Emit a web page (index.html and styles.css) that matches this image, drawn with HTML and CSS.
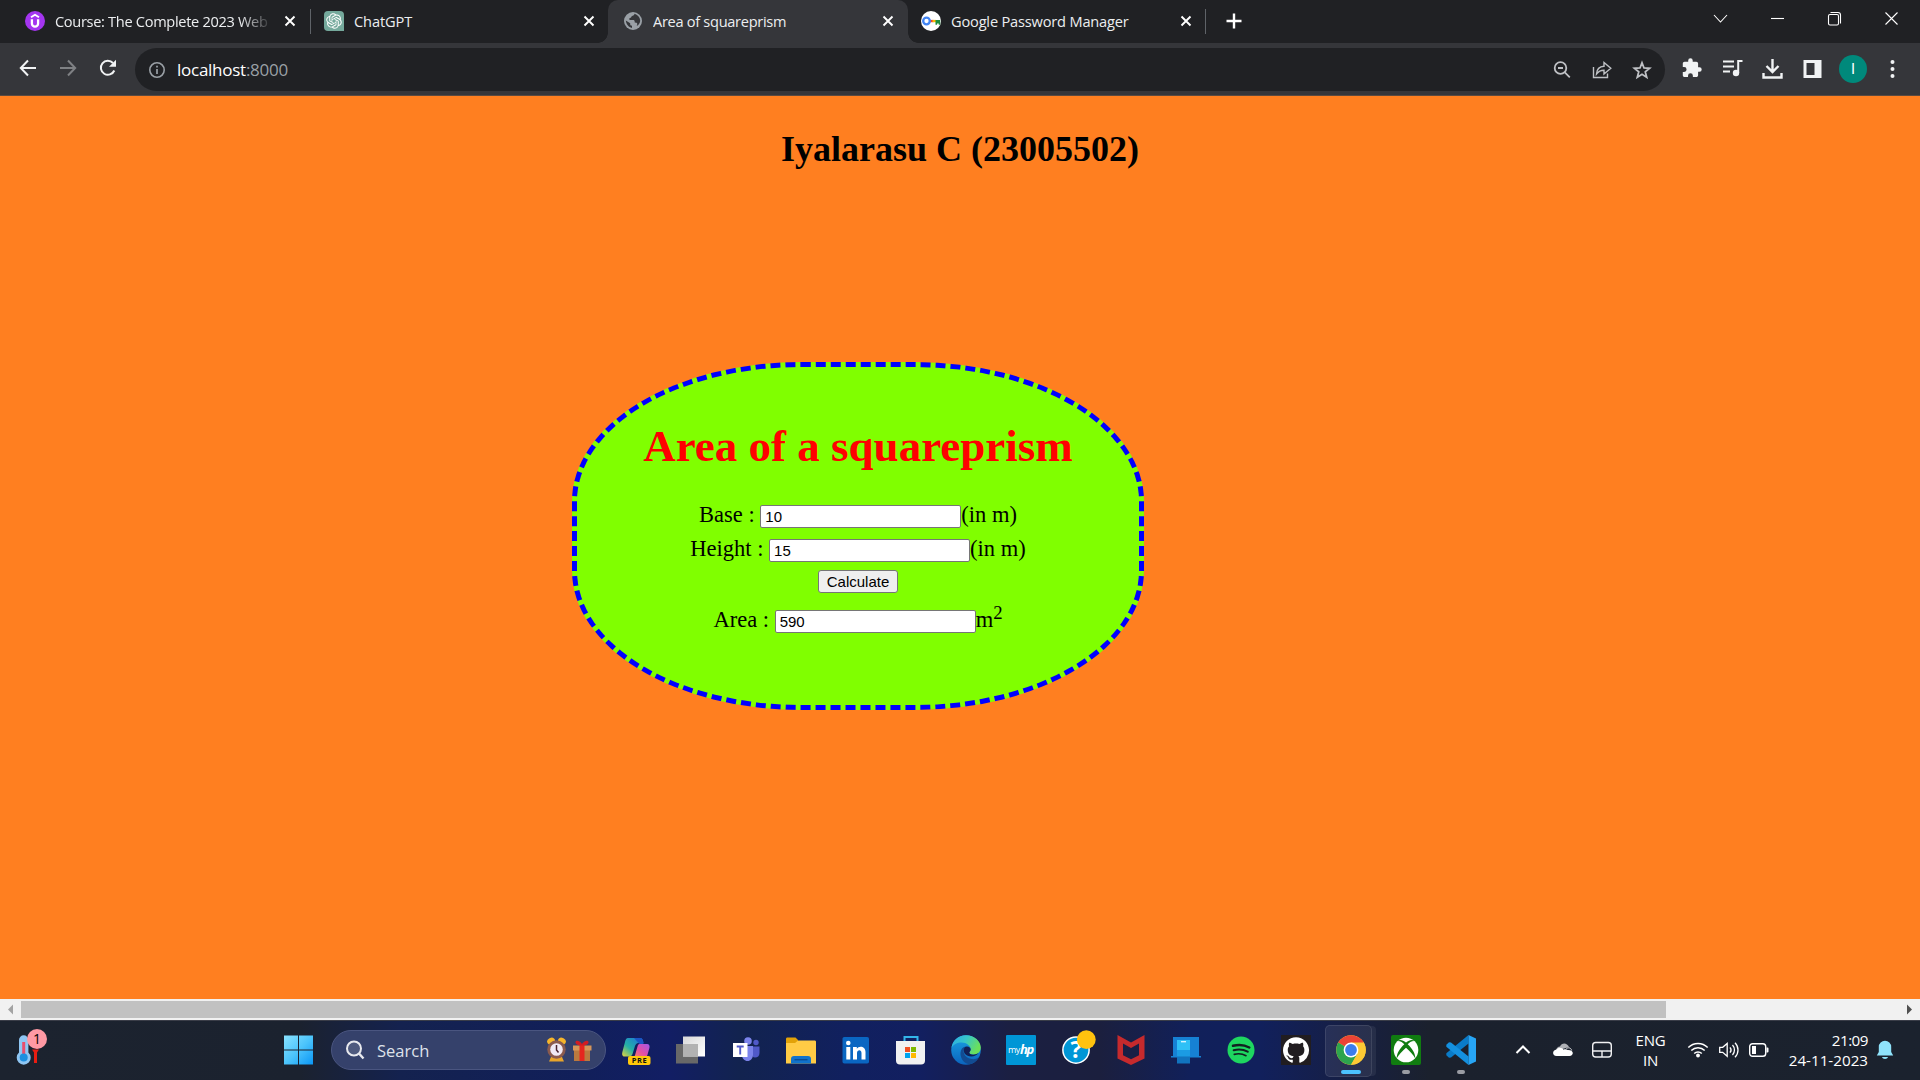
FILE: index.html
```html
<!DOCTYPE html>
<html lang="en">
<head>
<meta charset="utf-8">
<title>Area of squareprism</title>
<link rel="stylesheet" href="styles.css">
</head>
<body>
<div class="screen">
  <header class="tabs">
    <div class="tab tab-first">
      <svg class="favicon" viewBox="0 0 20 20"><circle cx="10" cy="10" r="10" fill="#a435f0"/><path d="M6.900 8.300v4.300a3.100 3.100 0 0 0 6.200 0V8.300" fill="none" stroke="#fff" stroke-width="2.300"/><path d="M6 6.200L10 3.800l4 2.400" fill="none" stroke="#fff" stroke-width="1.900"/></svg>
      <span class="tab-title faded"><span class="t1">Course: The Complete 2023 Web</span></span>
      <svg class="tab-close" viewBox="0 0 12 12"><path d="M1.500 1.500l9 9M10.500 1.500l-9 9"/></svg>
    </div>
    <div class="tab tab-second">
      <svg class="favicon" viewBox="0 0 20 20"><path d="M4 0h12a4 4 0 0 1 4 4v16H4a4 4 0 0 1-4-4V4a4 4 0 0 1 4-4z" fill="#75a99c"/><path transform="translate(2.200 2.200) scale(.65)" fill="#fff" d="M22.2819 9.8211a5.9847 5.9847 0 0 0-.5157-4.9108 6.0462 6.0462 0 0 0-6.5098-2.9A6.0651 6.0651 0 0 0 4.9807 4.1818a5.9847 5.9847 0 0 0-3.9977 2.9 6.0462 6.0462 0 0 0 .7427 7.0966 5.98 5.98 0 0 0 .511 4.9107 6.051 6.051 0 0 0 6.5146 2.9001A5.9847 5.9847 0 0 0 13.2599 24a6.0557 6.0557 0 0 0 5.7718-4.2058 5.9894 5.9894 0 0 0 3.9977-2.9001 6.0557 6.0557 0 0 0-.7475-7.0729zm-9.022 12.6081a4.4755 4.4755 0 0 1-2.8764-1.0408l.1419-.0804 4.7783-2.7582a.7948.7948 0 0 0 .3927-.6813v-6.7369l2.02 1.1686a.071.071 0 0 1 .038.052v5.5826a4.504 4.504 0 0 1-4.4945 4.4944zm-9.6607-4.1254a4.4708 4.4708 0 0 1-.5346-3.0137l.142.0852 4.783 2.7582a.7712.7712 0 0 0 .7806 0l5.8428-3.3685v2.3324a.0804.0804 0 0 1-.0332.0615L9.74 19.9502a4.4992 4.4992 0 0 1-6.1408-1.6464zM2.3408 7.8956a4.485 4.485 0 0 1 2.3655-1.9728V11.6a.7664.7664 0 0 0 .3879.6765l5.8144 3.3543-2.0201 1.1685a.0757.0757 0 0 1-.071 0l-4.8303-2.7865A4.504 4.504 0 0 1 2.3408 7.872zm16.5963 3.8558L13.1038 8.364 15.1192 7.2a.0757.0757 0 0 1 .071 0l4.8303 2.7913a4.4944 4.4944 0 0 1-.6765 8.1042v-5.6772a.79.79 0 0 0-.407-.667zm2.0107-3.0231l-.142-.0852-4.7735-2.7818a.7759.7759 0 0 0-.7854 0L9.409 9.2297V6.8974a.0662.0662 0 0 1 .0284-.0615l4.8303-2.7866a4.4992 4.4992 0 0 1 6.6802 4.66zM8.3065 12.863l-2.02-1.1638a.0804.0804 0 0 1-.038-.0567V6.0742a4.4992 4.4992 0 0 1 7.3757-3.4537l-.142.0805L8.704 5.459a.7948.7948 0 0 0-.3927.6813zm1.0976-2.3654l2.602-1.4998 2.6069 1.4998v2.9994l-2.5974 1.4997-2.6067-1.4997Z"/></svg>
      <span class="tab-title"><span class="t2">ChatGPT</span></span>
      <svg class="tab-close" viewBox="0 0 12 12"><path d="M1.500 1.500l9 9M10.500 1.500l-9 9"/></svg>
    </div>
    <div class="tab tab-active">
      <svg class="favicon" viewBox="0 0 20 20"><circle cx="10" cy="10" r="9" fill="#9aa0a6"/><path d="M11.500 2.800c-.3 1.500-1 2-2.700 2.200-.6 1.500-1 1.900-2.500 2.200l.2 1.800h4.200c1.200.3 1 2 1 2.600l1.800.2c1.100.3.800 2 .2 3.200 2.300-1.200 3.600-3.500 3.500-5.500-.3-3.300-2.600-6-5.700-6.700zM2.800 9.500c.3 3.600 2.800 6.800 6.200 7.500v-2.300c-1.500 0-2-.8-1.800-2.500z" fill="#35363a"/></svg>
      <span class="tab-title"><span class="t3">Area of squareprism</span></span>
      <svg class="tab-close" viewBox="0 0 12 12"><path d="M1.500 1.500l9 9M10.500 1.500l-9 9"/></svg>
    </div>
    <div class="tab tab-last">
      <svg class="favicon" viewBox="0 0 20 20"><circle cx="10" cy="10" r="10" fill="#fff"/><path d="M9 8.900h3.500v2.300H9z" fill="#ea4335"/><path d="M11.500 8.900H15v2.300h-3.500z" fill="#fbbc04"/><path d="M14.500 8.900h4.700v4.800h-1.500v-1.200h-1.600v1.200h-1.600z" fill="#1e8e3e"/><circle cx="5.500" cy="10" r="3.300" fill="none" stroke="#4285f4" stroke-width="2.300"/></svg>
      <span class="tab-title"><span class="t4">Google Password Manager</span></span>
      <svg class="tab-close" viewBox="0 0 12 12"><path d="M1.500 1.500l9 9M10.500 1.500l-9 9"/></svg>
    </div>
    <svg class="new-tab" viewBox="0 0 16 16"><path d="M8 .5v15M.5 8h15" stroke="#fff" stroke-width="2.400"/></svg>
    <div class="window-buttons">
      <svg viewBox="0 0 15 15"><path d="M1 4l6.500 7L14 4"/></svg>
      <svg viewBox="0 0 15 15"><path d="M1 7.500h13"/></svg>
      <svg viewBox="0 0 15 15"><rect x="1.500" y="3.500" width="10" height="10.500" rx="1.500"/><path d="M3.500 1.500H11a2.500 2.500 0 0 1 2.500 2.500v8.500"/></svg>
      <svg viewBox="0 0 15 15"><path d="M1.500 1.500l12 12M13.500 1.500l-12 12"/></svg>
    </div>
  </header>

  <div class="toolbar">
    <div class="nav">
      <svg viewBox="0 0 20 20"><path d="M18 10H3M10 2.500L2.800 10 10 17.500" stroke="#f1f3f4"/></svg>
      <svg viewBox="0 0 20 20"><path d="M2 10h15M10 2.500l7.200 7.500L10 17.500" stroke="#7f8184"/></svg>
      <svg viewBox="0 0 20 20"><path d="M16.300 12.500A7 7 0 1 1 15 5" stroke="#f1f3f4"/><path d="M18 1.800v7h-7z" fill="#f1f3f4"/></svg>
    </div>
    <div class="omnibox">
      <svg class="info" viewBox="0 0 18 18"><circle cx="9" cy="9" r="7.200" fill="none" stroke="#9aa0a6" stroke-width="1.600"/><path d="M9 8v5M9 4.800v1.800" stroke="#9aa0a6" stroke-width="1.700"/></svg>
      <span class="url"><span class="host">localhost</span><span class="port">:8000</span></span>
      <div class="omni-icons">
        <svg viewBox="0 0 20 20"><circle cx="8.500" cy="8" r="5.800"/><path d="M12.800 12.300l5 5M6 8h5"/></svg>
        <svg viewBox="0 0 20 20"><path d="M1.500 7v10.500h14V13.500M4.500 14C4.800 9.500 7.500 6.500 12 6.300V2.500L18.800 8.300 12 14v-3.700C8.500 10.200 6.500 11.500 4.500 14z" stroke-width="1.400"/></svg>
        <svg viewBox="0 0 20 20"><path d="M10 2.800l2 5.200 5.600.3-4.300 3.600 1.400 5.400-4.700-3-4.700 3 1.400-5.400L2.400 8.300 8 8z"/></svg>
      </div>
    </div>
    <div class="actions">
      <svg viewBox="0 0 24 24"><path transform="translate(1 .3) scale(.9)" d="M20.500 11H19V7c0-1.100-.9-2-2-2h-4V3.500a2.500 2.500 0 0 0-5 0V5H4c-1.100 0-2 .9-2 2v3.800h1.500a2.700 2.700 0 0 1 0 5.400H2V20c0 1.100.9 2 2 2h3.800v-1.500a2.700 2.700 0 0 1 5.400 0V22H17c1.100 0 2-.9 2-2v-4h1.500a2.500 2.500 0 0 0 0-5z" fill="#f1f3f4"/></svg>
      <svg viewBox="0 0 24 24"><path d="M3 4.500h11M3 9.500h11M3 14.500h7M18.200 16V4h4.300" fill="none" stroke="#f1f3f4" stroke-width="2"/><circle cx="16" cy="16" r="3.200" fill="#f1f3f4"/></svg>
      <svg viewBox="0 0 24 24"><path d="M12.500 2v12M6.500 9l6 6 6-6M3.500 16v4.500h18V16" fill="none" stroke="#f1f3f4" stroke-width="2.400"/></svg>
      <svg viewBox="0 0 24 24"><path d="M3.500 3h18v18h-18zM6.500 6v12h8V6z" fill="#f1f3f4" fill-rule="evenodd"/></svg>
      <span class="avatar">I</span>
      <svg viewBox="0 0 24 24"><g fill="#f1f3f4"><circle cx="10.500" cy="5" r="2"/><circle cx="10.500" cy="12" r="2"/><circle cx="10.500" cy="19" r="2"/></g></svg>
    </div>
  </div>

  <main class="page">
    <h1 class="owner">Iyalarasu C (23005502)</h1>
    <form class="card">
      <h1 class="title">Area of a squareprism</h1>
      <div class="row">Base : <input type="text" value="10">(in m)</div>
      <div class="row">Height : <input type="text" value="15">(in m)</div>
      <div class="submit"><button type="button">Calculate</button></div>
      <div class="row">Area : <input type="text" value="590">m<sup>2</sup></div>
    </form>
  </main>

  <div class="scrollbar">
    <svg viewBox="0 0 21 21"><path d="M13 5.500v10L8 10.500z" fill="#a3a3a3"/></svg>
    <div class="thumb"></div>
    <svg class="arrow-right" viewBox="0 0 21 21"><path d="M8 5.500v10l5-5z" fill="#505050"/></svg>
  </div>

  <footer class="taskbar">
    <div class="weather">
      <svg viewBox="0 0 40 44"><path d="M7 12a4.700 4.700 0 0 1 9.400 0v12.500a7 7 0 1 1-9.400 0z" fill="#8fc6f3"/><path d="M10.200 14h3v14h-3z" fill="#e84e6e"/><circle cx="11.700" cy="29.500" r="4" fill="#1c8fe0"/><path d="M20 21.500h7l-2 3v10.500h-3V24.500z" fill="#e81d12"/><circle cx="25" cy="11" r="10" fill="#ff99a4"/></svg>
      <span class="badge">1</span>
    </div>
    <div class="cell start"><svg viewBox="0 0 30 30"><defs><linearGradient id="win" gradientUnits="userSpaceOnUse" x1="0" y1="0" x2="30" y2="30"><stop offset="0" stop-color="#8be3ff"/><stop offset=".5" stop-color="#4cc4fb"/><stop offset="1" stop-color="#0794f5"/></linearGradient></defs><path d="M0 .500h14v14H0zM15 .500h14v14H15zM0 15.500h14v14H0zM15 15.500h14v14H15z" fill="url(#win)"/></svg></div>
    <div class="search">
      <svg class="lens" viewBox="0 0 20 20"><circle cx="9" cy="8.500" r="7" fill="#ffffff22" stroke="#e8e9ee" stroke-width="2"/><path d="M14 13.500l4.500 5" stroke="#e8e9ee" stroke-width="2.400"/></svg>
      <span class="search-label"><span class="t6">Search</span></span>
      <svg class="gifts" viewBox="0 0 46 26"><ellipse cx="5" cy="4" rx="4" ry="3.200" fill="#f6b52a" transform="rotate(-28 5 4)"/><ellipse cx="16" cy="4" rx="4" ry="3.200" fill="#f6b52a" transform="rotate(28 16 4)"/><path d="M5 20h11l2 4.500H3z" fill="#e9a52b"/><circle cx="10.500" cy="12.500" r="9.200" fill="#8b5a4e"/><circle cx="10.500" cy="12.500" r="6.300" fill="#f0e9f5"/><path d="M10.500 8v5l2 2.500" fill="none" stroke="#4b2530" stroke-width="1.500"/><path d="M28 11h16v13H28z" fill="#b9793f"/><path d="M27 8.500h18.500v5H27z" fill="#d79659"/><path d="M33.500 8h5v16h-5z" fill="#e5261f"/><path d="M36 8.500c-3 0-7-1-6.500-3.500s5-1 6.500 2c1.500-3 6-4.500 6.500-2S39 8.500 36 8.500z" fill="#d31c22"/></svg>
    </div>
    <div class="apps">
      <div class="cell"><svg viewBox="0 0 30 30"><defs><linearGradient id="cpa" x1="0" y1="1" x2="1" y2="0"><stop offset="0" stop-color="#e7d43b"/><stop offset=".4" stop-color="#25b0a5"/><stop offset="1" stop-color="#1c6ee0"/></linearGradient><linearGradient id="cpb" x1="1" y1="0" x2="0" y2="1"><stop offset="0" stop-color="#a157e8"/><stop offset=".5" stop-color="#e24fa5"/><stop offset="1" stop-color="#ff8757"/></linearGradient></defs><path d="M7 3h12c2.500 0 3 2 3.500 5h-5c-2 0-3 1.500-3.500 3l-2.500 8c-.6 2-2 2.500-4 2.500H3.500C1 21.500.8 19 1.500 16.500L4 7c.6-2.500 1.400-4 3-4z" fill="url(#cpa)"/><path d="M13 3h6c2.500 0 3 2 3.500 6h-4z" fill="#1a55c4"/><path d="M18.500 9H26c2.300 0 3 1.800 2.400 4l-2 7c-.6 2-1.400 3-3 3H11c2.500-1 3-2.500 3.500-4.500l2-7c.4-1.500.8-2.500 2-2.500z" fill="url(#cpb)"/><rect x="7" y="21" width="22.500" height="9" rx="2" fill="#ffc80a"/><text x="18.600" y="28.400" text-anchor="middle" class="pre">PRE</text></svg></div>
      <div class="cell"><svg viewBox="0 0 30 30"><defs><linearGradient id="tv" x1="0" y1="0" x2="1" y2="1"><stop offset="0" stop-color="#d8d8d8"/><stop offset="1" stop-color="#fff"/></linearGradient></defs><path d="M0 9h22v19.500H0z" fill="#686868"/><path d="M7 1.500h22v20H7z" fill="url(#tv)"/><path d="M7 9h15v12.500H7z" fill="#b2b2b2"/></svg></div>
      <div class="cell"><svg viewBox="0 0 30 30"><circle cx="17" cy="6" r="3.800" fill="#7b83eb"/><circle cx="25" cy="7.500" r="2.700" fill="#5059c9"/><path d="M21 11.500h7.500v6.500c0 3-2 4.500-4.500 4.500s-3-2-3-4z" fill="#5059c9"/><path d="M11 11h11v8.500c0 4-2.500 6.500-5.500 6.500S11 23.500 11 20z" fill="#7b83eb"/><path d="M2 8h14.500v14H2z" fill="#fff"/><path d="M5.700 11.500h7M9.200 11.500v8" stroke="#5059c9" stroke-width="1.900"/></svg></div>
      <div class="cell"><svg viewBox="0 0 30 30"><path d="M0 4c0-1 .5-1.500 1.500-1.500h8L12 5v4H0z" fill="#e2a208"/><path d="M0 8h9l3-2.500h16.500c1 0 1.500.5 1.500 1.500v21.500H0z" fill="#ffcb45"/><path d="M5 28.500V24c0-2 1-3 3-3h14c2 0 3 1 3 3v4.500z" fill="#1173cb"/><path d="M8.500 24.700h13" stroke="#0a4d94" stroke-width="1.400"/></svg></div>
      <div class="cell"><svg viewBox="0 0 30 30"><rect x="1.500" y="2" width="26.500" height="26.500" rx="1.800" fill="#0a66c2"/><circle cx="7.300" cy="8" r="2.300" fill="#fff"/><path d="M5.300 12h4v12.500h-4zM12 12h3.800v1.800c2-3.500 8.700-3 8.700 3.200v7.500h-4V18c0-4-4.500-3.500-4.500 0v6.500h-4z" fill="#fff"/></svg></div>
      <div class="cell"><svg viewBox="0 0 30 30"><path d="M8.500 6V2h13v4" fill="none" stroke="#33b5ea" stroke-width="2"/><path d="M0 6h29v19.500a4 4 0 0 1-4 4H4a4 4 0 0 1-4-4z" fill="#f1f1f1"/><path d="M9 12h5v5H9z" fill="#f25022"/><path d="M15 12h5v5h-5z" fill="#7fba00"/><path d="M9 18h5v5H9z" fill="#00a4ef"/><path d="M15 18h5v5h-5z" fill="#ffb900"/></svg></div>
      <div class="cell"><svg viewBox="0 0 30 30"><defs><linearGradient id="eda" x1="0" y1="0" x2="1" y2=".4"><stop offset="0" stop-color="#2ba9e8"/><stop offset=".5" stop-color="#37c6c9"/><stop offset="1" stop-color="#6be05a"/></linearGradient><linearGradient id="edb" x1="0" y1="0" x2="0" y2="1"><stop offset="0" stop-color="#1ba3e4"/><stop offset="1" stop-color="#0b63bd"/></linearGradient></defs><circle cx="15" cy="15" r="14.800" fill="url(#edb)"/><path d="M.5 13C1.500 5 7.500.2 15 .2c8.500 0 14.800 6 14.800 12.300 0 4.500-3.500 7-7 7-3 0-4.500-1-4.500-2 0-.8 1.400-1.300 1.400-3.500 0-3-4-6.500-9-6.500C6 7.500 2 9.500.5 13z" fill="url(#eda)"/><path d="M11 13.500c-4 6 .5 15.500 8 15.700 4-1 7-3.500 8.700-6.700-3 2-6 2-9 1-4-1-6.700-5-6-8.500.3-1.800 1.500-3 3-3.500-2 0-3.700.8-4.700 2z" fill="#124b92"/><path d="M15.500 11.500c-4 1-3.500 7 .5 9 4 1.800 9 1 11.500-2.500-4.500 3-9.500 1.500-9.200-.5.200-.8 1.400-1.300 1.400-3 0-1.600-1.700-3.300-4.200-3z" fill="#122056"/></svg></div>
      <div class="cell"><svg viewBox="0 0 30 30"><rect width="30" height="30" rx="1" fill="#0096d6"/><text x="2" y="18" class="my">my</text><text x="14" y="19" class="hp">hp</text></svg></div>
      <div class="cell"><svg viewBox="0 0 30 32"><circle cx="15" cy="16" r="14" fill="#0096d6" stroke="#fff" stroke-width="1.600"/><text x="15" y="25" text-anchor="middle" class="help">?</text><circle cx="26" cy="5" r="10" fill="#ffc20e"/></svg></div>
      <div class="cell"><svg viewBox="0 0 30 30"><path d="M1.500 0L15 7.500 28.500 0v23.500L15 30 1.500 23.500z" fill="#c62a2d"/><path d="M7 8.500l8 4.500 8-4.500v11.800l-8 4-8-4z" fill="#191f45"/></svg></div>
      <div class="cell"><svg viewBox="0 0 30 30"><path d="M2 2h26v19h2v1.500H0V21h2z" fill="#1681d4"/><path d="M6 5h13v23.500H6z" fill="#1173be"/><path d="M6 5h13v10.500H6z" fill="#2fc0f6"/><path d="M6 15h13v6.500H6z" fill="#1b9be3"/><path d="M10 6.700h5" stroke="#dff6ff" stroke-width="1.300"/></svg></div>
      <div class="cell"><svg viewBox="0 0 30 30"><circle cx="15" cy="15" r="13.500" fill="#1ed760"/><g fill="none" stroke="#122021" stroke-linecap="round"><path d="M7 10.800c5.500-1.500 11.500-1 16.300 1.700" stroke-width="2.500"/><path d="M7.700 15.200c5-1.300 9.800-.8 14 1.500" stroke-width="2.100"/><path d="M8.300 19.300c4.200-1 8.200-.6 11.700 1.400" stroke-width="1.700"/></g></svg></div>
      <div class="cell"><svg viewBox="0 0 30 30"><path d="M0 0h30v30H0z" fill="#211d20"/><path transform="translate(2 2.300) scale(1.630)" d="M8 0C3.580 0 0 3.580 0 8c0 3.540 2.290 6.530 5.470 7.590.4.070.55-.17.55-.38 0-.19-.01-.82-.01-1.490-2.010.37-2.530-.49-2.690-.94-.09-.23-.48-.94-.82-1.130-.28-.15-.68-.52-.01-.53.630-.01 1.080.58 1.230.82.720 1.210 1.870.87 2.330.66.070-.52.280-.87.510-1.070-1.780-.2-3.640-.89-3.640-3.950 0-.87.310-1.590.82-2.150-.08-.2-.36-1.020.08-2.120 0 0 .67-.21 2.200.82.640-.18 1.320-.27 2-.27s1.360.09 2 .27c1.530-1.040 2.200-.82 2.200-.82.440 1.100.16 1.920.08 2.120.51.560.82 1.270.82 2.150 0 3.070-1.870 3.750-3.650 3.950.29.25.54.73.54 1.480 0 1.070-.01 1.930-.01 2.200 0 .21.150.46.550.38A8.010 8.010 0 0 0 16 8c0-4.420-3.580-8-8-8z" fill="#fff"/></svg></div>
      <div class="cell current"><svg viewBox="0 0 30 30"><circle cx="15" cy="15" r="14.800" fill="#fcc934"/><path d="M15 15L2.200 7.600A14.800 14.800 0 0 1 27.800 7.600z" fill="#ea4335"/><path d="M2.200 7.600A14.800 14.800 0 0 0 15 29.800l6.400-11.100L15 15z" fill="#2da44e"/><path d="M15 15l6.400 3.700L15 29.800h1A14.800 14.800 0 0 0 27.800 7.600H15z" fill="#fcc934"/><circle cx="15" cy="15" r="7.400" fill="#fff"/><circle cx="15" cy="15" r="5.900" fill="#3b7ded"/></svg></div>
      <div class="cell running"><svg viewBox="0 0 30 30"><rect width="30" height="30" rx="2" fill="#107c10"/><circle cx="15" cy="15" r="12.300" fill="#fff"/><path d="M6.300 6C9 4.200 12 5.200 15 7.500 18 5.200 21 4.200 23.700 6 20.500 5.800 18 7.800 16.700 9.200 21 13 24.500 18.500 24.300 23.500 22.500 20 18.500 15.500 15 12.700 11.500 15.500 7.500 20 5.700 23.500 5.500 18.500 9 13 13.300 9.200 12 7.800 9.500 5.800 6.300 6z" fill="#107c10"/></svg></div>
      <div class="cell running"><svg viewBox="0 0 30 30"><path d="M22.500 0v8.500L5 22.500l-2 .2-2.700-2.500v-2z" fill="#0a7bc8"/><path d="M22.500 30v-8.500L5 7.500l-2-.2L.300 9.800v2z" fill="#1490df"/><path d="M22.500 0L30 3.500v23L22.500 30z" fill="#27a5f5"/></svg></div>
    </div>
    <div class="tray">
      <svg class="w40" viewBox="0 0 22 22"><path d="M4.500 14L11 7.500l6.500 6.500" fill="none" stroke="#fff" stroke-width="2"/></svg>
      <svg class="w40" viewBox="0 0 22 22"><path d="M4 12c0-3 2-4.500 4-4.500C9.500 3.500 15 3 17 8z" fill="#aeb0b5"/><path d="M4.500 17C0 17 0 11 4.500 10.500c2-2.500 5.500-2.300 7 .2 1.500-.6 3-.5 4 .3C22.500 10.500 22 17 17.500 17z" fill="#fff"/><path d="M14 10.300c1-2 5-2.300 5.700 1.200" fill="none" stroke="#d6d7da" stroke-width="1"/></svg>
      <svg class="w38" viewBox="0 0 22 22"><g fill="none" stroke="#f0f0f2" stroke-width="1.400"><rect x="1.700" y="3.500" width="18.600" height="14.500" rx="3"/><path d="M2 12h18M11 12v6"/></g></svg>
      <div class="lang"><span class="t7">ENG</span><span>IN</span></div>
      <svg class="w32" viewBox="0 0 22 22"><g fill="none" stroke="#fff" stroke-width="1.500"><path d="M1.300 8.500a13.500 13.500 0 0 1 19.400 0M4.300 11.500a9.400 9.400 0 0 1 13.400 0M7.200 14.500a5.400 5.400 0 0 1 7.600 0"/></g><circle cx="11" cy="16.500" r="1.900" fill="#fff"/></svg>
      <svg class="w30" viewBox="0 0 22 22"><g fill="none" stroke="#fff" stroke-width="1.300"><path d="M1.700 8.300v5h3l4.500 4V4.500l-4.500 3.800zM12 8.300c1.300 1.600 1.300 3.800 0 5.400M14.500 6c2.600 2.800 2.600 7.200 0 10M17 3.700c4 4 4 10.600 0 14.600"/></g></svg>
      <svg class="w30" viewBox="0 0 22 22"><rect x="1.700" y="4.700" width="16" height="12.600" rx="2.800" fill="none" stroke="#fff" stroke-width="1.400"/><path d="M4 7h4v8H4zM18.500 8.500h1a1 1 0 0 1 1 1v3a1 1 0 0 1-1 1h-1z" fill="#fff"/></svg>
      <div class="clock"><span class="t8">21:09</span><span class="t9">24-11-2023</span></div>
      <svg class="bell" viewBox="0 0 22 22"><path d="M2.800 16.500L4.800 13V8a6.200 6.200 0 0 1 12.400 0v5l2 3.500z" fill="#8fe3fb"/><path d="M8 18h6c-.6 2.500-5.400 2.500-6 0z" fill="#8fe3fb"/></svg>
    </div>
  </footer>
</div>
</body>
</html>
```
FILE: styles.css
```css
* { box-sizing: border-box; }
body { margin: 0; overflow: hidden; }
svg { display: block; flex: none; }

.screen {
  width: 1920px;
  height: 1080px;
  display: flex;
  flex-direction: column;
  font-family: "Open Sans", "Noto Sans", sans-serif;
}

/* Tab strip */
.tabs {
  height: 43px;
  display: flex;
  background: #202124;
}
.tab {
  height: 43px;
  display: flex;
  align-items: center;
  padding: 0 13px 1px 15px;
  flex: none;
}
.tab-first { width: 301px; margin-left: 10px; padding-right: 15px; }
.tab-second { width: 297px; padding: 0 13px 1px 13px; }
.tab-first, .tab-last {
  background: linear-gradient(#5f6368, #5f6368) right 9px / 1px 25px no-repeat;
}
.tab-active {
  width: 300px;
  background: #35363a;
  border-radius: 10px 10px 0 0;
  padding-right: 14px;
  position: relative;
}
.tab-active::before, .tab-active::after {
  content: "";
  position: absolute;
  bottom: 0;
  width: 10px;
  height: 10px;
}
.tab-active::before { left: -10px; background: radial-gradient(circle at 0 0, transparent 9.500px, #35363a 10px); }
.tab-active::after { right: -10px; background: radial-gradient(circle at 100% 0, transparent 9.500px, #35363a 10px); }
.tab-last { width: 298px; padding: 0 14px 1px 13px; }
.favicon { width: 20px; height: 20px; }
.tab-title {
  flex: 1;
  overflow: hidden;
  white-space: nowrap;
  margin: 0 16px 0 10px;
  font-size: 14.600px;
  line-height: 24px;
  color: #eceef0;
}
.t1 { letter-spacing: -0.320px; }
.t2 { letter-spacing: -0.100px; }
.t3 { letter-spacing: -0.300px; }
.t4 { letter-spacing: -0.180px; }
.faded {
  -webkit-mask-image: linear-gradient(90deg, #000 185px, transparent 218px);
  mask-image: linear-gradient(90deg, #000 185px, transparent 218px);
}
.tab-close { width: 12px; height: 12px; fill: none; stroke: #fff; stroke-width: 1.900; }
.new-tab { width: 16px; height: 16px; margin: 13px 0 0 20px; }
.window-buttons { display: flex; margin: 11px 21px 0 auto; gap: 42px; }
.window-buttons svg { width: 15px; height: 15px; fill: none; stroke: #fff; stroke-width: 1.100; }

/* Toolbar */
.toolbar {
  height: 53px;
  display: flex;
  align-items: flex-start;
  padding-top: 5px;
  background: #35363a;
  border-bottom: 1px solid #5b4a40;
}
.nav { display: flex; gap: 20px; margin: 10px 17px 0 18px; }
.nav svg { width: 20px; height: 20px; fill: none; stroke-width: 2; }
.omnibox {
  width: 1530px;
  height: 43px;
  border-radius: 22px;
  background: #202124;
  display: flex;
  align-items: center;
  padding: 0 13px 0 13px;
}
.info { width: 18px; height: 18px; }
.url { margin-left: 11px; font-size: 17px; line-height: 24px; letter-spacing: -0.260px; color: #fff; }
.port { color: #9aa0a6; }
.omni-icons { display: flex; gap: 20px; margin-left: auto; }
.omni-icons svg { width: 20px; height: 20px; fill: none; stroke: #bfc1c5; stroke-width: 1.800; }
.actions { display: flex; align-items: center; gap: 16px; margin: 7px 0 0 15px; }
.actions svg { width: 24px; height: 24px; }
.avatar {
  width: 28px;
  height: 28px;
  margin: 0 -1px;
  border-radius: 50%;
  background: #00897b;
  color: #fff;
  font: 15px/28px Roboto, sans-serif;
  text-align: center;
}

/* Web page */
.page {
  height: 903px;
  padding-top: 33px;
  background: #ff7f20;
  font-family: "Liberation Serif", "Times New Roman", serif;
  color: #000;
}
.owner {
  margin: 0 0 193px;
  font-size: 36px;
  line-height: 40px;
  text-align: center;
}
.card {
  width: 572px;
  height: 348px;
  margin: 0 0 0 572px;
  padding-top: 54px;
  border: 5px dashed #00f;
  border-radius: 40%;
  background: #80ff00;
  text-align: center;
  font-size: 22.500px;
}
.title {
  margin: 0 0 31px;
  font-size: 45px;
  line-height: 50px;
  color: #f00;
}
.row { height: 25px; line-height: 25px; margin-bottom: 9px; white-space: nowrap; }
.row sup { line-height: 0; }
.row input {
  width: 201px;
  height: 23px;
  margin: 0;
  padding: 1px 3px 1px 4px;
  border: 1px solid #767676;
  border-radius: 2px;
  font: 15px "Liberation Sans", Arial, sans-serif;
  background: #fff;
  color: #000;
}
.submit { display: flex; justify-content: center; margin-bottom: 14px; }
.submit button {
  width: 80px;
  height: 23px;
  padding: 0;
  border: 1px solid #767676;
  border-radius: 3px;
  background: #efefef;
  color: #000;
  font: 15px "Liberation Sans", Arial, sans-serif;
}

.scrollbar {
  height: 21px;
  display: flex;
  background: #f1f1f1;
}
.scrollbar svg { width: 21px; height: 21px; }
.thumb { width: 1645px; height: 17px; margin-top: 2px; background: #c1c1c1; }
.arrow-right { margin-left: auto; }

/* Taskbar */
.taskbar {
  height: 60px;
  display: flex;
  align-items: center;
  color: #fff;
  background:
    linear-gradient(#3a3d48, #3a3d48) 0 0 / 100% 1px no-repeat,
    linear-gradient(90deg, #1c232f 0, #1b222f 300px, #14224f 400px, #111f5a 580px, #121e64 670px, #12234f 740px, #11205f 850px, #121f60 920px, #1b1f42 1010px, #1b1f3e 1100px, #11205a 1190px, #11205c 1260px, #161f46 1340px, #1b212d 1430px, #1b222e 1920px);
}
.weather { width: 271px; height: 44px; padding-left: 12px; position: relative; }
.weather svg { width: 40px; height: 44px; }
.badge {
  position: absolute;
  left: 27px;
  top: 1px;
  width: 20px;
  text-align: center;
  font-size: 14px;
  line-height: 20px;
  color: #000;
}
.cell { width: 55px; height: 60px; display: flex; align-items: center; justify-content: center; flex: none; }
.cell svg { width: 30px; height: 30px; overflow: visible; }
.search {
  width: 275px;
  height: 40px;
  margin: 0 2px 0 5px;
  padding: 0 13px;
  display: flex;
  align-items: center;
  border: 1px solid #4a5580;
  border-radius: 20px;
  background: #35416b;
  flex: none;
}
.lens { width: 20px; height: 20px; }
.search-label { margin-left: 12px; font-size: 16.500px; color: #dfe2ea; }
.gifts { width: 46px; height: 26px; margin-left: auto; }
.apps { display: flex; flex: none; }
.pre { font: 700 7.500px "Open Sans", sans-serif; letter-spacing: 0.600px; fill: #111; }
.my { font: 9px "Open Sans", sans-serif; fill: #fff; letter-spacing: -0.500px; }
.hp { font: italic 700 13px "Open Sans", sans-serif; fill: #fff; letter-spacing: -1.300px; }
.help { font: 700 25px "Open Sans", sans-serif; fill: #fff; }
.current, .running { position: relative; }
.current::before {
  content: "";
  position: absolute;
  left: 2px;
  top: 5px;
  width: 45px;
  height: 50px;
  border: 1px solid #ffffff1a;
  border-radius: 5px;
  background: #ffffff14;
  box-shadow: 5px 0 0 -1px #ffffff10;
}
.current svg { position: relative; }
.current::after, .running::after {
  content: "";
  position: absolute;
  left: 24px;
  top: 50px;
  width: 8px;
  height: 4px;
  border-radius: 2px;
  background: #9a9ca3;
}
.current::after { left: 18px; width: 20px; background: #4cc2ff; }

.tray { display: flex; align-items: center; margin-left: 15px; flex: none; }
.tray svg { height: 22px; }
.w40 { width: 40px; }
.w38 { width: 38px; }
.w32 { width: 32px; }
.w30 { width: 30px; }
.lang { width: 59px; margin-right: 2px; display: flex; flex-direction: column; align-items: center; font-size: 15px; line-height: 20px; letter-spacing: -0.200px; }
.clock { width: 94px; display: flex; flex-direction: column; align-items: flex-end; font-size: 15.200px; line-height: 20px; letter-spacing: 0; }
.t8 { letter-spacing: -0.500px; }
.bell { width: 22px; margin-left: 6px; }
```
